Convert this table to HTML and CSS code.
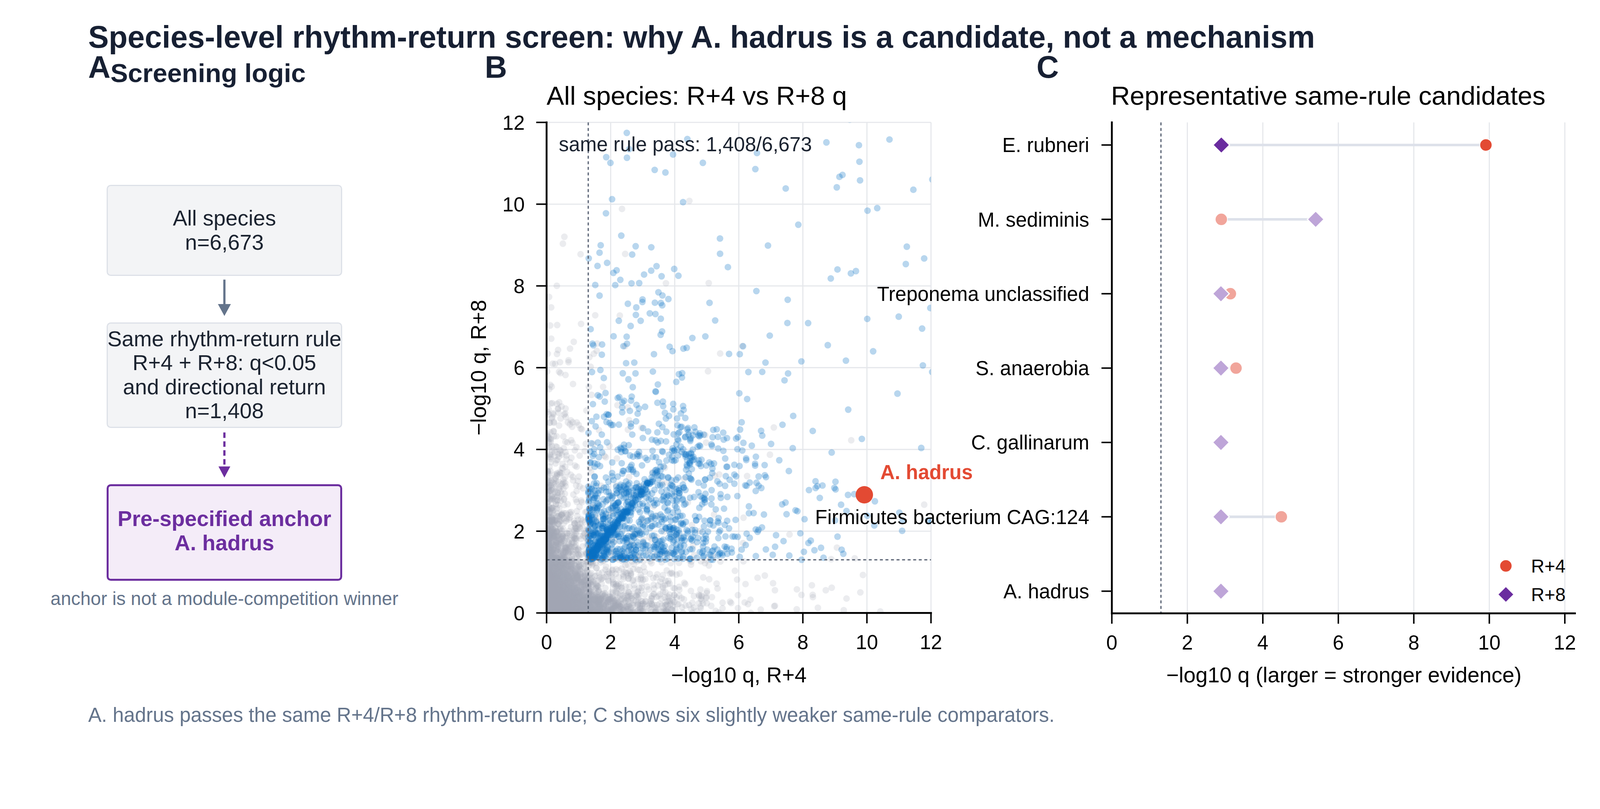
FILE: index.html
```html
<!DOCTYPE html>
<html lang="en">
<head>
<meta charset="utf-8">
<title>Species-level rhythm-return screen</title>
<link rel="stylesheet" href="styles.css">
</head>
<body>
<div class="figure">
  <h1 class="suptitle">Species-level rhythm-return screen: why A. hadrus is a candidate, not a mechanism</h1>
  <div class="panels">
    <section class="panel panel-a">
      <div class="panel-head">
        <span class="panel-label">A</span>
        <h2 class="flow-title">Screening logic</h2>
      </div>
      <div class="flow">
        <div class="box box-neutral box-1"><span>All species</span><span>n=6,673</span></div>
        <svg class="arrow" width="60" height="125" viewBox="0 0 60 125">
          <line class="arrow-solid" x1="30" y1="10" x2="30" y2="80"/>
          <polygon class="arrow-head-solid" points="12.5,76 47.5,76 30,108"/>
        </svg>
        <div class="box box-neutral box-2"><span>Same rhythm-return rule</span><span>R+4 + R+8: q&lt;0.05</span><span>and directional return</span><span>n=1,408</span></div>
        <svg class="arrow" width="60" height="152" viewBox="0 0 60 152">
          <line class="arrow-dashed" x1="30" y1="12" x2="30" y2="106"/>
          <polygon class="arrow-head-dashed" points="14,104 46,104 30,134"/>
        </svg>
        <div class="box box-anchor"><span>Pre-specified anchor</span><span>A. hadrus</span></div>
        <p class="flow-note">anchor is not a module-competition winner</p>
      </div>
    </section>

    <section class="panel panel-b">
      <span class="panel-label">B</span>
      <h2 class="panel-title">All species: R+4 vs R+8 q</h2>
      <svg class="chart" width="1450" height="1576" viewBox="0 0 1450 1576">
        <defs>
          <clipPath id="clip-b"><rect x="226" y="35" width="1038" height="1324"/></clipPath>
        </defs>
        <g class="grid">
          <line x1="399" y1="35" x2="399" y2="1359"/>
          <line x1="572" y1="35" x2="572" y2="1359"/>
          <line x1="745" y1="35" x2="745" y2="1359"/>
          <line x1="918" y1="35" x2="918" y2="1359"/>
          <line x1="1091" y1="35" x2="1091" y2="1359"/>
          <line x1="1264" y1="35" x2="1264" y2="1359"/>
          <line x1="226" y1="1138.3" x2="1264" y2="1138.3"/>
          <line x1="226" y1="917.7" x2="1264" y2="917.7"/>
          <line x1="226" y1="697" x2="1264" y2="697"/>
          <line x1="226" y1="476.3" x2="1264" y2="476.3"/>
          <line x1="226" y1="255.7" x2="1264" y2="255.7"/>
          <line x1="226" y1="35" x2="1264" y2="35"/>
        </g>
        <g id="scatter-points" clip-path="url(#clip-b)"></g>
        <line class="threshold" x1="338.5" y1="35" x2="338.5" y2="1359"/>
        <line class="threshold" x1="226" y1="1215.5" x2="1264" y2="1215.5"/>
        <circle class="anchor-dot" cx="1084" cy="1040" r="23.5"/>
        <text class="note-text" x="259" y="113">same rule pass: 1,408/6,673</text>
        <text class="anchor-text" x="1127" y="998">A. hadrus</text>
        <g class="spines">
          <line x1="226" y1="32.5" x2="226" y2="1361.5"/>
          <line x1="223.5" y1="1359" x2="1266.5" y2="1359"/>
        </g>
        <g class="ticks">
          <line x1="226" y1="1359" x2="226" y2="1387"/>
          <line x1="399" y1="1359" x2="399" y2="1387"/>
          <line x1="572" y1="1359" x2="572" y2="1387"/>
          <line x1="745" y1="1359" x2="745" y2="1387"/>
          <line x1="918" y1="1359" x2="918" y2="1387"/>
          <line x1="1091" y1="1359" x2="1091" y2="1387"/>
          <line x1="1264" y1="1359" x2="1264" y2="1387"/>
          <line x1="198" y1="1359" x2="226" y2="1359"/>
          <line x1="198" y1="1138.3" x2="226" y2="1138.3"/>
          <line x1="198" y1="917.7" x2="226" y2="917.7"/>
          <line x1="198" y1="697" x2="226" y2="697"/>
          <line x1="198" y1="476.3" x2="226" y2="476.3"/>
          <line x1="198" y1="255.7" x2="226" y2="255.7"/>
          <line x1="198" y1="35" x2="226" y2="35"/>
        </g>
        <g class="tick-labels tick-x">
          <text x="226" y="1457">0</text>
          <text x="399" y="1457">2</text>
          <text x="572" y="1457">4</text>
          <text x="745" y="1457">6</text>
          <text x="918" y="1457">8</text>
          <text x="1091" y="1457">10</text>
          <text x="1264" y="1457">12</text>
        </g>
        <g class="tick-labels tick-y">
          <text x="167" y="1378.4">0</text>
          <text x="167" y="1157.7">2</text>
          <text x="167" y="937.1">4</text>
          <text x="167" y="716.4">6</text>
          <text x="167" y="495.7">8</text>
          <text x="167" y="275.1">10</text>
          <text x="167" y="54.4">12</text>
        </g>
        <text class="axis-label" x="745" y="1546">−log10 q, R+4</text>
        <text class="axis-label" transform="translate(62 697) rotate(-90)" x="0" y="0">−log10 q, R+8</text>
      </svg>
    </section>

    <section class="panel panel-c">
      <span class="panel-label">C</span>
      <h2 class="panel-title">Representative same-rule candidates</h2>
      <svg class="chart" width="1620" height="1576" viewBox="0 0 1620 1576">
        <g class="grid">
          <line x1="505.9" y1="35" x2="505.9" y2="1360"/>
          <line x1="709.7" y1="35" x2="709.7" y2="1360"/>
          <line x1="913.6" y1="35" x2="913.6" y2="1360"/>
          <line x1="1117.4" y1="35" x2="1117.4" y2="1360"/>
          <line x1="1321.3" y1="35" x2="1321.3" y2="1360"/>
          <line x1="1525.2" y1="35" x2="1525.2" y2="1360"/>
        </g>
        <line class="threshold" x1="434.6" y1="35" x2="434.6" y2="1360"/>
        <g class="links">
          <line x1="597.6" y1="96" x2="1312.1" y2="96"/>
          <line x1="597.6" y1="296.7" x2="852.4" y2="296.7"/>
          <line x1="596.6" y1="497.4" x2="622.1" y2="497.4"/>
          <line x1="596.6" y1="698.1" x2="637.3" y2="698.1"/>
          <line x1="596.6" y1="1099.5" x2="759.7" y2="1099.5"/>
        </g>
        <g class="markers">
          <circle class="r4-strong" cx="1312.1" cy="96" r="16.5"/>
          <polygon class="r8-strong" points="597.6,73.5 620.1,96 597.6,118.5 575.1,96"/>
          <circle class="r4-soft" cx="597.6" cy="296.7" r="16.5"/>
          <polygon class="r8-soft" points="852.4,274.2 874.9,296.7 852.4,319.2 829.9,296.7"/>
          <circle class="r4-soft" cx="622.1" cy="497.4" r="16.5"/>
          <polygon class="r8-soft" points="596.6,474.9 619.1,497.4 596.6,519.9 574.1,497.4"/>
          <circle class="r4-soft" cx="637.3" cy="698.1" r="16.5"/>
          <polygon class="r8-soft" points="596.6,675.6 619.1,698.1 596.6,720.6 574.1,698.1"/>
          <circle class="r4-soft" cx="597" cy="898.8" r="16.5"/>
          <polygon class="r8-soft" points="596.6,876.3 619.1,898.8 596.6,921.3 574.1,898.8"/>
          <circle class="r4-soft" cx="759.7" cy="1099.5" r="16.5"/>
          <polygon class="r8-soft" points="596.6,1077 619.1,1099.5 596.6,1122 574.1,1099.5"/>
          <circle class="r4-soft" cx="597" cy="1300.2" r="16.5"/>
          <polygon class="r8-soft" points="596.6,1277.7 619.1,1300.2 596.6,1322.7 574.1,1300.2"/>
        </g>
        <g class="spines">
          <line x1="302" y1="32.5" x2="302" y2="1362.5"/>
          <line x1="299.5" y1="1360" x2="1555" y2="1360"/>
        </g>
        <g class="ticks">
          <line x1="302" y1="1360" x2="302" y2="1388"/>
          <line x1="505.9" y1="1360" x2="505.9" y2="1388"/>
          <line x1="709.7" y1="1360" x2="709.7" y2="1388"/>
          <line x1="913.6" y1="1360" x2="913.6" y2="1388"/>
          <line x1="1117.4" y1="1360" x2="1117.4" y2="1388"/>
          <line x1="1321.3" y1="1360" x2="1321.3" y2="1388"/>
          <line x1="1525.2" y1="1360" x2="1525.2" y2="1388"/>
          <line x1="274" y1="96" x2="302" y2="96"/>
          <line x1="274" y1="296.7" x2="302" y2="296.7"/>
          <line x1="274" y1="497.4" x2="302" y2="497.4"/>
          <line x1="274" y1="698.1" x2="302" y2="698.1"/>
          <line x1="274" y1="898.8" x2="302" y2="898.8"/>
          <line x1="274" y1="1099.5" x2="302" y2="1099.5"/>
          <line x1="274" y1="1300.2" x2="302" y2="1300.2"/>
        </g>
        <g class="tick-labels tick-x">
          <text x="302" y="1458">0</text>
          <text x="505.9" y="1458">2</text>
          <text x="709.7" y="1458">4</text>
          <text x="913.6" y="1458">6</text>
          <text x="1117.4" y="1458">8</text>
          <text x="1321.3" y="1458">10</text>
          <text x="1525.2" y="1458">12</text>
        </g>
        <g class="tick-labels tick-y">
          <text x="241" y="115.4">E. rubneri</text>
          <text x="241" y="316.1">M. sediminis</text>
          <text x="241" y="516.8">Treponema unclassified</text>
          <text x="241" y="717.5">S. anaerobia</text>
          <text x="241" y="918.2">C. gallinarum</text>
          <text x="241" y="1118.9">Firmicutes bacterium CAG:124</text>
          <text x="241" y="1319.6">A. hadrus</text>
        </g>
        <text class="axis-label" x="928.5" y="1546">−log10 q (larger = stronger evidence)</text>
        <g class="legend">
          <circle class="r4-strong" cx="1366" cy="1232" r="16.5"/>
          <text x="1434" y="1250">R+4</text>
          <polygon class="r8-strong" points="1366,1287 1388,1309 1366,1331 1344,1309"/>
          <text x="1434" y="1327">R+8</text>
        </g>
      </svg>
    </section>
  </div>
  <p class="footnote">A. hadrus passes the same R+4/R+8 rhythm-return rule; C shows six slightly weaker same-rule comparators.</p>
</div>
<script src="script.js"></script>
</body>
</html>
```

FILE: styles.css
```css
* {
  box-sizing: border-box;
}

html,
body {
  margin: 0;
  padding: 0;
  background: #ffffff;
  overflow: hidden;
}

body {
  width: 4320px;
  height: 2070px;
  zoom: var(--fit, 1);
  font-family: "Liberation Sans", Arial, sans-serif;
  color: #172033;
}

.figure {
  width: 4320px;
  height: 2070px;
  padding: 51px 0 0 238px;
  display: grid;
  grid-template-rows: 100px 1720px 95px;
  align-content: start;
}

.suptitle {
  margin: 0;
  font-size: 83.33px;
  line-height: 100px;
  font-weight: 700;
  color: #172033;
  white-space: nowrap;
}

.panels {
  display: grid;
  grid-template-columns: 1012px 1450px 1620px;
  grid-template-rows: 1720px;
}

.panel {
  min-width: 0;
}

.panel-label {
  display: block;
  height: 62px;
  font-size: 83.33px;
  line-height: 62px;
  font-weight: 700;
  color: #172033;
}

.panel-b .panel-label {
  margin-left: 59px;
}

.panel-c .panel-label {
  margin-left: 99px;
}

/* Panel A: flow chart */
.panel-head {
  display: flex;
  align-items: flex-start;
}

.flow-title {
  margin: 15.5px 0 0 0;
  font-size: 70.83px;
  line-height: 62px;
  font-weight: 700;
  color: #172033;
  white-space: nowrap;
}

.flow {
  width: 636px;
  margin: 270.5px 0 0 50px;
  display: flex;
  flex-direction: column;
  align-items: center;
}

.box {
  width: 636px;
  display: flex;
  flex-direction: column;
  align-items: center;
  justify-content: center;
  border-radius: 11px;
  font-size: 58.33px;
  line-height: 65px;
  white-space: nowrap;
  text-align: center;
}

.box span {
  display: block;
}

.box-neutral {
  background: #f3f4f6;
  border: 4px solid #dde1e8;
  color: #1b2330;
}

.box-1 {
  height: 246px;
}

.box-2 {
  height: 285px;
}

.box-anchor {
  height: 260px;
  background: #f4ecf8;
  border: 6px solid #6c2e9f;
  color: #6c2e9f;
  font-weight: 700;
  padding-bottom: 8px;
}

.arrow {
  display: block;
  overflow: visible;
}

.arrow-solid {
  stroke: #64748b;
  stroke-width: 6;
}

.arrow-head-solid {
  fill: #64748b;
}

.arrow-dashed {
  stroke: #6c2e9f;
  stroke-width: 6;
  stroke-dasharray: 15 9;
}

.arrow-head-dashed {
  fill: #6c2e9f;
}

.flow-note {
  margin: 19px 0 0 0;
  font-size: 50px;
  line-height: 60px;
  color: #64748b;
  white-space: nowrap;
}

/* Panels B and C: charts */
.panel-title {
  margin: 7px 0 0 226px;
  height: 75px;
  font-size: 70.83px;
  line-height: 75px;
  font-weight: 400;
  color: #000000;
  white-space: nowrap;
}

.panel-c .panel-title {
  margin-left: 300px;
}

.chart {
  display: block;
  overflow: visible;
  font-family: "Liberation Sans", Arial, sans-serif;
}

.grid line {
  stroke: #e5e7eb;
  stroke-width: 3;
}

.pt-fail {
  fill: #a2a8b4;
  fill-opacity: 0.22;
}

.pt-pass {
  fill: #0a71c6;
  fill-opacity: 0.29;
}

.threshold {
  stroke: #5f6878;
  stroke-width: 3.5;
  stroke-dasharray: 8 7;
}

.anchor-dot {
  fill: #e34a33;
}

.note-text {
  font-size: 54.17px;
  fill: #1b2330;
}

.anchor-text {
  font-size: 54.17px;
  font-weight: 700;
  fill: #e34a33;
}

.spines line {
  stroke: #000000;
  stroke-width: 5;
}

.ticks line {
  stroke: #000000;
  stroke-width: 4;
}

.tick-labels text {
  font-size: 54.17px;
  fill: #000000;
}

.tick-x text {
  text-anchor: middle;
}

.tick-y text {
  text-anchor: end;
}

.axis-label {
  font-size: 58.33px;
  fill: #000000;
  text-anchor: middle;
}

.links line {
  stroke: #dde1ea;
  stroke-width: 7;
}

.r4-strong {
  fill: #e34a33;
  stroke: #ffffff;
  stroke-width: 2;
}

.r8-strong {
  fill: #6a2c9f;
  stroke: #ffffff;
  stroke-width: 3;
}

.r4-soft {
  fill: #f1a59b;
  stroke: #ffffff;
  stroke-width: 2;
}

.r8-soft {
  fill: #bea5d8;
  stroke: #ffffff;
  stroke-width: 3;
}

.legend text {
  font-size: 50px;
  fill: #000000;
}

.footnote {
  margin: 25px 0 0 0;
  font-size: 54.17px;
  line-height: 70px;
  color: #64748b;
  white-space: nowrap;
}
```

FILE: script.js
```js
(function () {
  // fit the 4320x2070 figure into the browser's CSS viewport
  var fit = Math.min(window.innerWidth / 4320, window.innerHeight / 2070) * 0.9999;
  if (fit > 0 && isFinite(fit)) {
    document.documentElement.style.setProperty("--fit", String(fit));
  }

  var NS = "http://www.w3.org/2000/svg";
  var group = document.getElementById("scatter-points");
  if (!group) return;

  var X0 = 226, Y0 = 1359, SX = 86.5, SY = 110.33;
  var T = 1.301;

  var seed = 20240611;
  function rnd() {
    seed |= 0;
    seed = (seed + 0x6D2B79F5) | 0;
    var t = Math.imul(seed ^ (seed >>> 15), 1 | seed);
    t = (t + Math.imul(t ^ (t >>> 7), 61 | t)) ^ t;
    return ((t ^ (t >>> 14)) >>> 0) / 4294967296;
  }
  function exp(m) { return -Math.log(1 - rnd()) * m; }
  function norm() {
    var u = 0;
    while (u === 0) u = rnd();
    return Math.sqrt(-2 * Math.log(u)) * Math.cos(2 * Math.PI * rnd());
  }

  var frag = document.createDocumentFragment();
  function add(x, y, cls) {
    var c = document.createElementNS(NS, "circle");
    c.setAttribute("cx", (X0 + x * SX).toFixed(1));
    c.setAttribute("cy", (Y0 - y * SY).toFixed(1));
    c.setAttribute("r", "9");
    c.setAttribute("class", cls);
    frag.appendChild(c);
  }

  // species failing the rule
  var nFail = 6673 - 1408, made = 0;
  while (made < nFail) {
    var r = rnd(), x, y;
    if (r < 0.45) {
      x = exp(0.42); y = exp(0.42);
    } else if (r < 0.68) {
      x = exp(1.5); y = exp(0.45);
      if (y > T) y = rnd() * T;
    } else if (r < 0.93) {
      x = exp(0.45); if (x > T) x = rnd() * T;
      y = exp(1.3);
    } else {
      x = exp(2.2); y = exp(2.0);
    }
    if (x > 12.3 || y > 12.3) continue;
    add(x, y, "pt-fail");
    made++;
  }

  // species passing the same rhythm-return rule
  var nPass = 1408; made = 0;
  while (made < nPass) {
    var q = rnd(), px, py;
    if (q < 0.18) {
      var t = T + 0.04 + exp(0.8);
      if (t > 5.2) continue;
      px = t + norm() * 0.04; py = t + norm() * 0.05;
    } else if (q < 0.52) {
      px = T + 3.0 * Math.pow(rnd(), 1.4);
      py = T + 1.8 * Math.pow(rnd(), 1.3);
    } else if (q < 0.62) {
      px = T + 3.2 * rnd();
      py = 3.0 + 2.2 * Math.pow(rnd(), 1.5);
    } else if (q < 0.76) {
      px = 4.3 + exp(1.3);
      py = T + 3.2 * Math.pow(rnd(), 1.3);
    } else if (q < 0.83) {
      px = T + rnd() * 10.8; py = T + rnd() * 10.8;
    } else if (q < 0.97) {
      px = T + exp(2.5); py = T + exp(2.6);
    } else {
      px = T + rnd() * 3.0; py = 5.0 + rnd() * 4.0;
    }
    if (px > 12.2 || py > 12.2 || px <= T || py <= T) continue;
    add(px, py, "pt-pass");
    made++;
  }

  group.appendChild(frag);
})();
```
